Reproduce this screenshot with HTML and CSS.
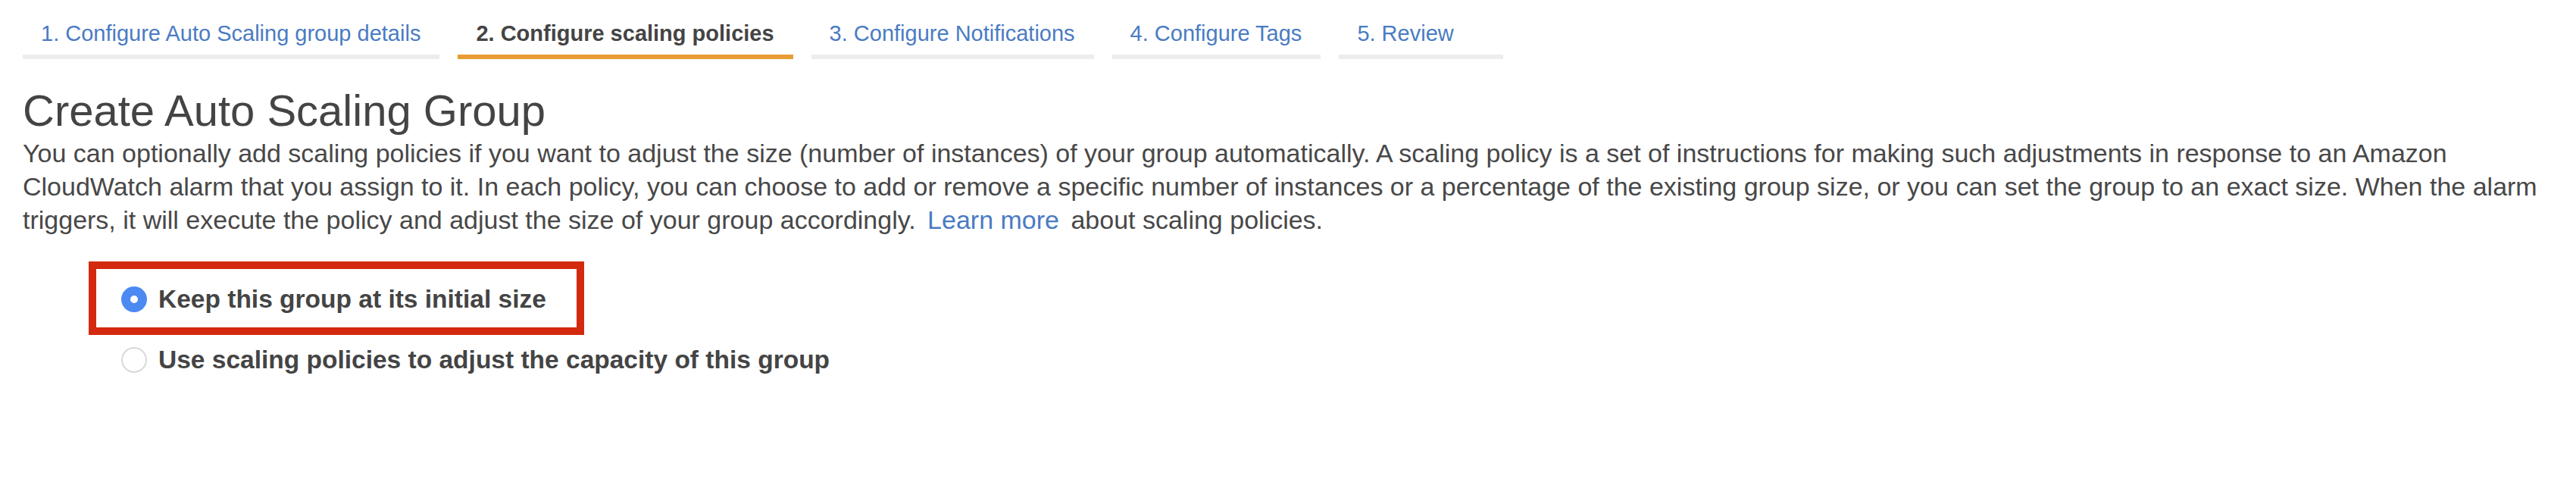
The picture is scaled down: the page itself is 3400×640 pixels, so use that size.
FILE: index.html
```html
<!DOCTYPE html>
<html lang="en">
<head>
<meta charset="utf-8">
<title>Create Auto Scaling Group</title>
<link rel="stylesheet" href="styles.css">
</head>
<body>
<div class="page">
  <nav class="steps">
    <a class="step">1. Configure Auto Scaling group details</a>
    <a class="step active">2. Configure scaling policies</a>
    <a class="step">3. Configure Notifications</a>
    <a class="step">4. Configure Tags</a>
    <a class="step">5. Review</a>
  </nav>
  <h1 class="title">Create Auto Scaling Group</h1>
  <p class="intro">You can optionally add scaling policies if you want to adjust the size (number of instances) of your group automatically. A scaling policy is a set of instructions for making such adjustments in response to an Amazon CloudWatch alarm that you assign to it. In each policy, you can choose to add or remove a specific number of instances or a percentage of the existing group size, or you can set the group to an exact size. When the alarm triggers, it will execute the policy and adjust the size of your group accordingly. <a class="link">Learn more</a> about scaling policies.</p>
  <div class="options">
    <div class="highlight">
      <label class="option"><span class="radio checked"></span><span class="label">Keep this group at its initial size</span></label>
    </div>
    <label class="option second"><span class="radio"></span><span class="label">Use scaling policies to adjust the capacity of this group</span></label>
  </div>
</div>
</body>
</html>
```
FILE: styles.css
```css
html, body {
  margin: 0;
  padding: 0;
  background: #ffffff;
}
body {
  font-family: "Liberation Sans", Arial, Helvetica, sans-serif;
  color: #444444;
}
.page {
  padding: 27px 20px 0 30px;
}
.steps {
  display: flex;
  gap: 24px;
}
.step {
  min-width: 217px;
  box-sizing: border-box;
  padding: 0 25px 11px 24px;
  font-size: 29px;
  line-height: 34px;
  color: #4a7bc3;
  border-bottom: 6px solid #ededed;
  white-space: nowrap;
}
.step.active {
  color: #444444;
  font-weight: bold;
  border-bottom-color: #e89c33;
}
.title {
  margin: 34px 0 0 0;
  font-size: 58px;
  line-height: 67px;
  font-weight: normal;
  color: #444444;
}
.intro {
  margin: 1px 0 0 0;
  font-size: 34px;
  line-height: 44px;
  color: #484848;
}
.link {
  color: #4a7bc3;
  padding: 0 6px;
}
.options {
  margin-top: 33px;
  display: flex;
  flex-direction: column;
  align-items: flex-start;
}
.highlight {
  margin-left: 87px;
  border: 10px solid #d32a0f;
  padding: 22px 40px 19px 33px;
}
.option {
  display: flex;
  align-items: center;
  gap: 15px;
}
.option.second {
  margin-left: 130px;
  margin-top: 15px;
}
.radio {
  width: 34px;
  height: 34px;
  border-radius: 50%;
  box-sizing: border-box;
  border: 2px solid #d9d9d9;
  background: #ffffff;
  display: flex;
  align-items: center;
  justify-content: center;
  flex: none;
}
.radio.checked {
  border: none;
  background: #4c8af2;
}
.radio.checked::after {
  content: "";
  width: 10px;
  height: 10px;
  border-radius: 50%;
  background: #ffffff;
}
.label {
  font-size: 33.5px;
  line-height: 36px;
  font-weight: bold;
  color: #444444;
}
```
